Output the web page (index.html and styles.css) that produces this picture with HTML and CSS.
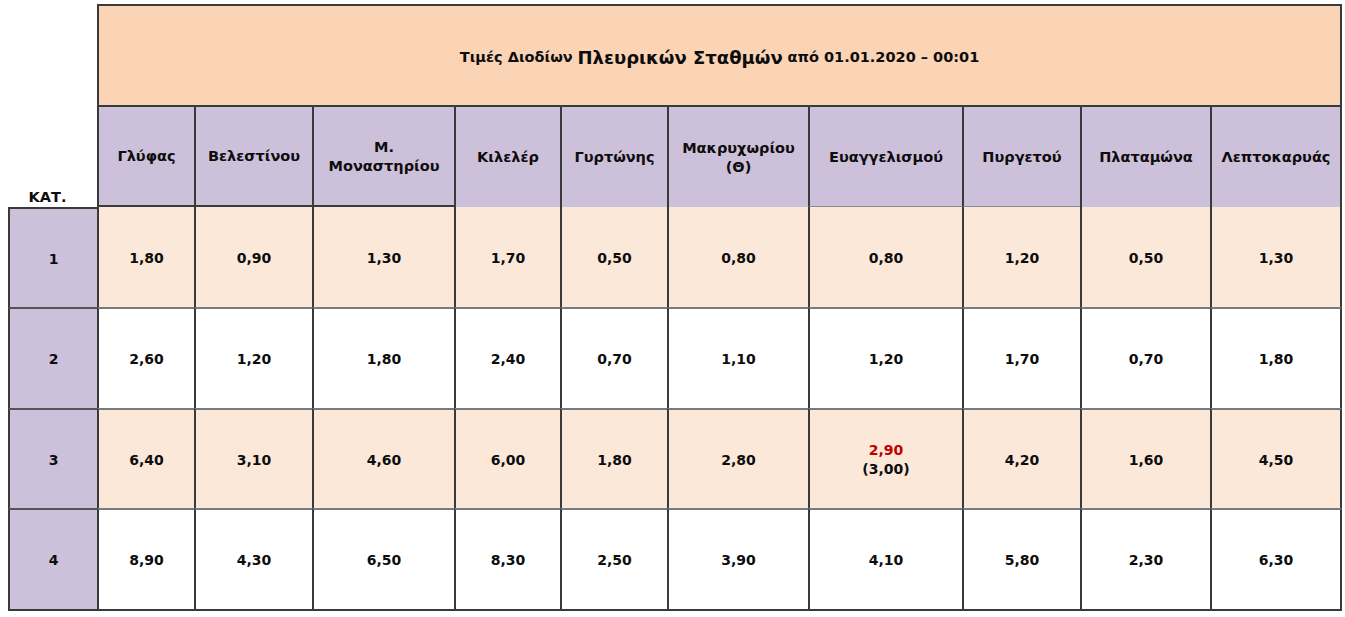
FILE: index.html
```html
<!DOCTYPE html>
<html lang="el">
<head>
<meta charset="utf-8">
<title>Τιμές Διοδίων</title>
<link rel="stylesheet" href="styles.css">
</head>
<body>
<div class="sheet">
  <div class="grid">
    <div class="corner">ΚΑΤ.</div>
    <div class="title"><span class="t-sm">Τιμές Διοδίων</span>&nbsp;<span class="t-lg">Πλευρικών Σταθμών</span>&nbsp;<span class="t-sm">από 01.01.2020 – 00:01</span></div>

    <div class="head hb">Γλύφας</div>
    <div class="head hb">Βελεστίνου</div>
    <div class="head hb">Μ.<br>Μοναστηρίου</div>
    <div class="head">Κιλελέρ</div>
    <div class="head">Γυρτώνης</div>
    <div class="head">Μακρυχωρίου<br>(Θ)</div>
    <div class="head hg">Ευαγγελισμού</div>
    <div class="head hg">Πυργετού</div>
    <div class="head">Πλαταμώνα</div>
    <div class="head last">Λεπτοκαρυάς</div>

    <div class="kat first">1</div>
    <div class="cell peach">1,80</div>
    <div class="cell peach">0,90</div>
    <div class="cell peach">1,30</div>
    <div class="cell peach">1,70</div>
    <div class="cell peach">0,50</div>
    <div class="cell peach">0,80</div>
    <div class="cell peach">0,80</div>
    <div class="cell peach">1,20</div>
    <div class="cell peach">0,50</div>
    <div class="cell peach last">1,30</div>

    <div class="kat">2</div>
    <div class="cell top">2,60</div>
    <div class="cell top">1,20</div>
    <div class="cell top">1,80</div>
    <div class="cell top">2,40</div>
    <div class="cell top">0,70</div>
    <div class="cell top">1,10</div>
    <div class="cell top">1,20</div>
    <div class="cell top">1,70</div>
    <div class="cell top">0,70</div>
    <div class="cell top last">1,80</div>

    <div class="kat">3</div>
    <div class="cell peach top">6,40</div>
    <div class="cell peach top">3,10</div>
    <div class="cell peach top">4,60</div>
    <div class="cell peach top">6,00</div>
    <div class="cell peach top">1,80</div>
    <div class="cell peach top">2,80</div>
    <div class="cell peach top stack"><span class="red">2,90</span><span>(3,00)</span></div>
    <div class="cell peach top">4,20</div>
    <div class="cell peach top">1,60</div>
    <div class="cell peach top last">4,50</div>

    <div class="kat bottom">4</div>
    <div class="cell top bottom">8,90</div>
    <div class="cell top bottom">4,30</div>
    <div class="cell top bottom">6,50</div>
    <div class="cell top bottom">8,30</div>
    <div class="cell top bottom">2,50</div>
    <div class="cell top bottom">3,90</div>
    <div class="cell top bottom">4,10</div>
    <div class="cell top bottom">5,80</div>
    <div class="cell top bottom">2,30</div>
    <div class="cell top bottom last">6,30</div>
  </div>
</div>
</body>
</html>
```

FILE: styles.css
```css
html, body {
  margin: 0;
  padding: 0;
  background: #ffffff;
}

body {
  font-family: "DejaVu Sans", Verdana, sans-serif;
  font-weight: bold;
  font-size: 14px;
  color: #0d0d0d;
}

.sheet {
  padding: 4px 0 0 8px;
}

.grid {
  display: grid;
  grid-template-columns: 89px 97px 118px 142px 106px 107px 141px 154px 118px 130px 132px;
  grid-template-rows: 101px 102px 100px 101px 100px 103px;
}

.grid > div {
  box-sizing: border-box;
  display: flex;
  align-items: center;
  justify-content: center;
  text-align: center;
  line-height: 19px;
}

.corner {
  grid-column: 1;
  grid-row: 1 / span 2;
  align-items: flex-end !important;
  padding-right: 10px;
  font-size: 14.5px;
}

.title {
  grid-column: 2 / span 10;
  grid-row: 1;
  background: #fbd3b5;
  border-top: 2px solid #3a3a3a;
  border-left: 2px solid #3a3a3a;
  border-right: 2px solid #3a3a3a;
  padding-top: 3px;
}

.t-sm {
  font-size: 14.5px;
}

.t-lg {
  font-size: 18px;
}

.head {
  background: #cdc0da;
  border-top: 2px solid #3a3a3a;
  border-left: 2px solid #3a3a3a;
  padding-top: 1px;
  font-size: 14.5px;
}

.head.hb {
  border-bottom: 2px solid #3a3a3a;
}

.head.hg {
  border-bottom: 1px solid #8a8a8a;
}

.head.last {
  border-right: 2px solid #3a3a3a;
}

.kat {
  background: #cdc0da;
  border-left: 2px solid #3a3a3a;
  border-top: 2px solid #555555;
  padding-top: 2px;
}

.kat.first {
  border-top: 2px solid #3a3a3a;
}

.kat.bottom,
.cell.bottom {
  border-bottom: 2px solid #3a3a3a;
}

.cell {
  background: #ffffff;
  border-left: 2px solid #3a3a3a;
  padding-top: 2px;
}

.cell.peach {
  background: #fce8d9;
}

.cell.top {
  border-top: 2px solid #7a7a7a;
}

.cell.last {
  border-right: 2px solid #3a3a3a;
}

.cell.stack {
  flex-direction: column;
}

.red {
  color: #c00000;
}
```
